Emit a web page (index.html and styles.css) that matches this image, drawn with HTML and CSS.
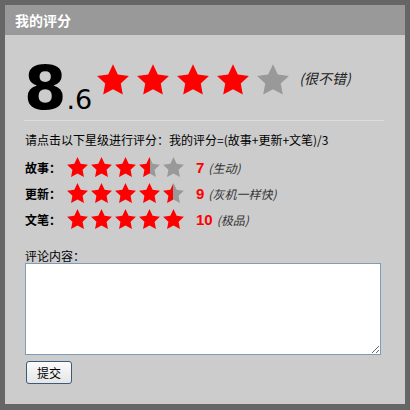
FILE: index.html
```html
<!DOCTYPE html>
<html>
<head>
<meta charset="utf-8">
<link rel="stylesheet" href="styles.css">
</head>
<body>
<svg class="defs" width="0" height="0" aria-hidden="true">
  <defs>
    <symbol id="star" viewBox="-15.3 -16 30.6 29">
      <polygon points="0,-16 4.6,-6.3 15.22,-4.94 7.4,2.4 9.4,12.94 0,7.8 -9.4,12.94 -7.4,2.4 -15.22,-4.94 -4.6,-6.3"/>
    </symbol>
    <linearGradient id="half" x1="0" y1="0" x2="1" y2="0">
      <stop offset="50%" stop-color="#ff0000"/>
      <stop offset="50%" stop-color="#999999"/>
    </linearGradient>
  </defs>
</svg>
<div class="panel">
  <div class="title">我的评分</div>
  <div class="content">
    <div class="score-row">
      <div class="big-score"><span class="int">8</span><span class="dec">.6</span></div>
      <div class="big-stars">
        <svg class="star big on"><use href="#star"/></svg>
        <svg class="star big on"><use href="#star"/></svg>
        <svg class="star big on"><use href="#star"/></svg>
        <svg class="star big on"><use href="#star"/></svg>
        <svg class="star big off"><use href="#star"/></svg>
        <span class="verdict">(很不错)</span>
      </div>
    </div>
    <div class="sep"></div>
    <div class="hint">请点击以下星级进行评分：我的评分=(故事+更新+文笔)/3</div>
    <div class="rate-row">
      <span class="label">故事：</span>
      <span class="stars">
        <svg class="star small on"><use href="#star"/></svg>
        <svg class="star small on"><use href="#star"/></svg>
        <svg class="star small on"><use href="#star"/></svg>
        <svg class="star small half"><use href="#star"/></svg>
        <svg class="star small off"><use href="#star"/></svg>
      </span>
      <span class="num">7</span>
      <span class="desc">(生动)</span>
    </div>
    <div class="rate-row">
      <span class="label">更新：</span>
      <span class="stars">
        <svg class="star small on"><use href="#star"/></svg>
        <svg class="star small on"><use href="#star"/></svg>
        <svg class="star small on"><use href="#star"/></svg>
        <svg class="star small on"><use href="#star"/></svg>
        <svg class="star small half"><use href="#star"/></svg>
      </span>
      <span class="num">9</span>
      <span class="desc">(灰机一样快)</span>
    </div>
    <div class="rate-row">
      <span class="label">文笔：</span>
      <span class="stars">
        <svg class="star small on"><use href="#star"/></svg>
        <svg class="star small on"><use href="#star"/></svg>
        <svg class="star small on"><use href="#star"/></svg>
        <svg class="star small on"><use href="#star"/></svg>
        <svg class="star small on"><use href="#star"/></svg>
      </span>
      <span class="num">10</span>
      <span class="desc">(极品)</span>
    </div>
    <div class="comment-label">评论内容：</div>
    <textarea class="comment"></textarea>
    <button class="submit" type="button">提交</button>
  </div>
</div>
</body>
</html>
```

FILE: styles.css
```css
html, body {
  margin: 0;
  padding: 0;
  background: #666666;
}
.defs {
  position: absolute;
  width: 0;
  height: 0;
  overflow: hidden;
}
.panel {
  width: 410px;
  height: 410px;
  box-sizing: border-box;
  border: 5px solid #666666;
  border-bottom-width: 6px;
  background: #cccccc;
  font-family: "Liberation Sans", "Noto Sans CJK SC", sans-serif;
  font-size: 12px;
  color: #000;
}
.title {
  height: 30px;
  line-height: 30px;
  padding-left: 10px;
  background: #999999;
  color: #fff;
  font-weight: bold;
  font-size: 14px;
  font-family: "Noto Sans CJK SC", sans-serif;
}
.content {
  padding: 0 21px 0 19px;
}
.score-row {
  display: flex;
  align-items: flex-start;
  margin-top: 22px;
  height: 62px;
}
.big-score {
  font-family: "DejaVu Sans", Verdana, sans-serif;
  line-height: 62px;
  white-space: nowrap;
  padding-left: 0;
}
.big-score .int {
  font-size: 61px;
  font-weight: bold;
}
.big-score .dec {
  font-size: 27px;
}
.big-stars {
  display: flex;
  align-items: center;
  gap: 8px;
  margin-top: 7px;
  margin-left: 5px;
}
.star {
  display: block;
  flex: none;
}
.star.big {
  width: 32px;
  height: 31px;
}
.star.small {
  width: 21px;
  height: 20px;
}
.star.on { fill: #ff0000; }
.star.off { fill: #999999; }
.star.half { fill: url(#half); }
.verdict {
  font-family: "Noto Sans CJK SC", sans-serif;
  font-size: 14px;
  font-style: italic;
  color: #222;
  line-height: 16px;
  margin-left: 2px;
  margin-top: -3px;
}
.sep {
  height: 1px;
  background: #dddddd;
  margin-top: 1px;
}
.hint {
  font-family: "Noto Sans CJK SC", sans-serif;
  line-height: 18px;
  margin-top: 10px;
  padding-left: 1px;
  margin-bottom: 5px;
}
.rate-row {
  display: flex;
  align-items: center;
  height: 26px;
  padding-left: 1px;
}
.label {
  font-family: "Noto Sans CJK SC", sans-serif;
  font-weight: bold;
  width: 36px;
  flex: none;
}
.stars {
  display: flex;
  gap: 3px;
  margin-left: 6px;
}
.num {
  font-family: "Liberation Sans", Arial, sans-serif;
  font-weight: bold;
  font-size: 15px;
  color: #ff0000;
  margin-left: 12px;
}
.desc {
  font-family: "Noto Sans CJK SC", sans-serif;
  font-style: italic;
  color: #333;
  margin-left: 4px;
}
.comment-label {
  font-family: "Noto Sans CJK SC", sans-serif;
  line-height: 15px;
  margin-top: 16px;
  padding-left: 1px;
}
.comment {
  display: block;
  box-sizing: border-box;
  width: 356px;
  height: 92px;
  margin: 0 0 0 1px;
  border: 1px solid #7f9db9;
  background: #fff;
  padding: 2px;
}
.submit {
  display: block;
  margin: 6px 0 0 2px;
  width: 46px;
  height: 23px;
  padding: 0;
  border: 1px solid #3c5a7a;
  border-radius: 3px;
  background: linear-gradient(#fbfbfb, #e6e6e6);
  font-family: "Noto Sans CJK SC", sans-serif;
  font-size: 12px;
  color: #000;
}
```
